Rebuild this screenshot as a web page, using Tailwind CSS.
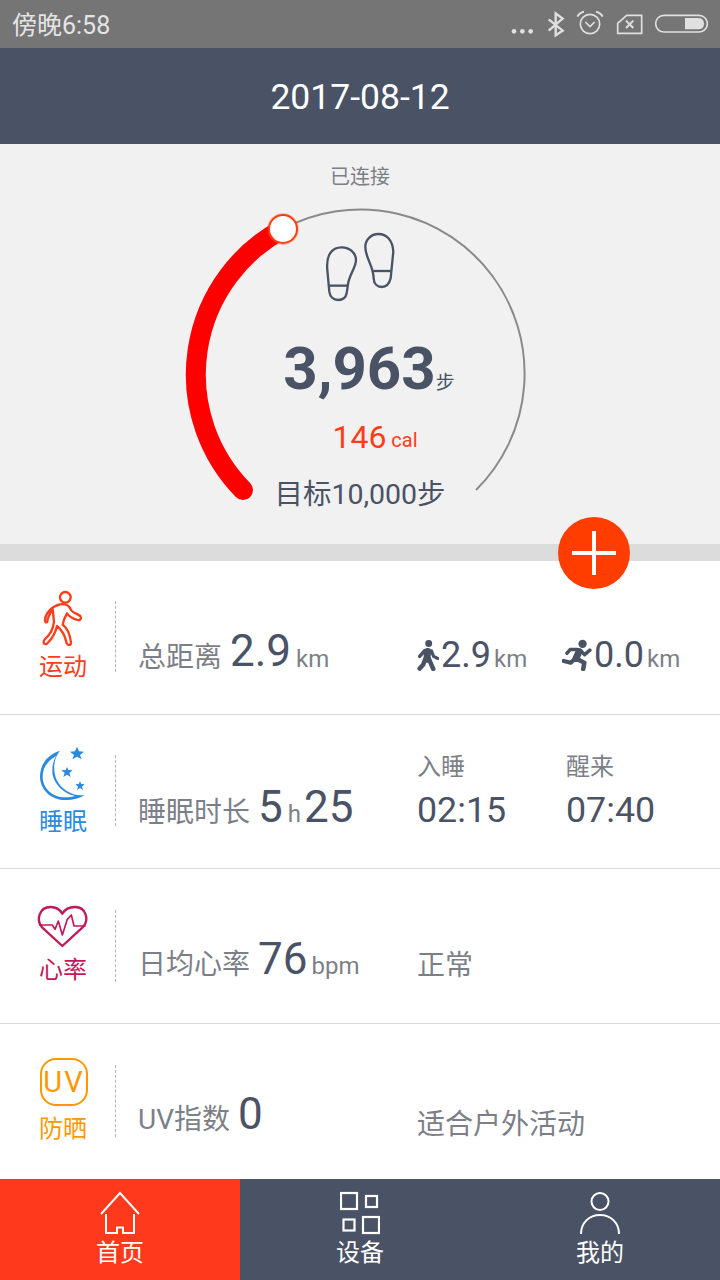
<!DOCTYPE html>
<html lang="zh-CN">
<head>
    <meta charset="UTF-8">
    <meta name="viewport" content="width=device-width, initial-scale=1.0">
    <title>Home</title>
    <script src="https://cdn.jsdelivr.net/npm/@tailwindcss/browser@4"></script>
</head>
<body class="w-[720px] h-[1280px] overflow-hidden bg-white font-['Roboto','Noto_Sans_CJK_SC',sans-serif] text-[#4a5266]">

    <!-- Status bar -->
    <div class="h-12 bg-[#757575] flex items-center justify-between pl-3 pr-3 text-[#e4e4e4]">
        <span class="text-[25px] leading-none pt-[3px]">傍晚6:58</span>
        <svg class="w-[200px] h-[48px]" viewBox="0 0 600 144" fill="none" stroke="#e0e0e0" stroke-width="5">
            <!-- coordinates are zoomed 3x, starting from x=508 -->
            <circle cx="18" cy="94" r="7" fill="#e0e0e0" stroke="none"/>
            <circle cx="43" cy="94" r="7" fill="#e0e0e0" stroke="none"/>
            <circle cx="68" cy="94" r="7" fill="#e0e0e0" stroke="none"/>
            <path d="M122 58 L164 92 L143 106 V40 L164 56 L122 92" stroke-width="7"/>
            <circle cx="246" cy="72" r="29"/>
            <path d="M232 66 L246 80 L260 66" stroke-width="5"/>
            <path d="M208 50 Q214 38 228 35 M264 35 Q278 38 284 50" stroke-width="6"/>
            <path d="M329 100 V70 L356 46 H401 V100 Z"/>
            <path d="M354 62 L376 84 M376 62 L354 84" stroke-width="6"/>
            <rect x="443" y="46" width="155" height="50" rx="25"/>
            <path d="M531 54 H570 Q588 54 588 71 Q588 88 570 88 H531 Z" fill="#e0e0e0" stroke="none"/>
        </svg>
    </div>

    <!-- Date header -->
    <div class="h-24 bg-[#4a5266] flex items-center justify-center pt-1 text-white text-[35.5px] leading-none">2017-08-12</div>

    <!-- Step ring -->
    <div class="relative h-[400px] bg-[#f1f1f1] flex flex-col items-center">
        <div class="mt-[21px] text-[20px] leading-6 text-[#7d7f88]">已连接</div>
        <svg class="absolute left-0 top-0" width="720" height="400" viewBox="0 144 720 400" fill="none">
            <path d="M283 229 A164 164 0 0 1 476 490" stroke="#8a8a8a" stroke-width="2"/>
            <path d="M243 490 A165 165 0 0 1 283 229" stroke="#ff0000" stroke-width="20" stroke-linecap="round"/>
            <circle cx="283" cy="229" r="15" fill="none" stroke="#ff3d0f" stroke-opacity=".25" stroke-width="2"/>
            <circle cx="283" cy="229" r="14" fill="#fff" stroke="#ff3d0f" stroke-width="2"/>
            <g transform="translate(170 190) scale(.3333)" stroke="#4a5266" stroke-width="7">
                <path d="M515 172 C540 172 558 190 558 210 C558 235 535 255 533 290 L530 310 C527 325 515 330 505 330 C490 330 480 320 478 305 L472 240 C468 195 485 172 515 172 Z"/>
                <path d="M477 287 H535"/>
                <path d="M625 132 C650 132 668 150 670 185 L662 265 C658 282 648 291 635 291 C622 291 612 282 611 265 C610 225 586 205 586 170 C586 150 603 132 625 132 Z"/>
                <path d="M608 243 H665"/>
            </g>
        </svg>
        <div class="relative mt-[146px] h-[68px] flex items-end leading-none pl-[18px]">
            <span class="text-[60px] font-bold leading-[68px]">3,963</span>
            <span class="text-[19px] mb-[11px]">步</span>
        </div>
        <div class="relative mt-[14px] flex items-end gap-[5px] pl-[30px] text-[#ff3d1a] leading-none h-[40px]">
            <span class="text-[32px] leading-[40px]">146</span>
            <span class="text-[20px] mb-[7px]">cal</span>
        </div>
        <div class="relative mt-[18px] text-[28.5px] leading-[40px]">目标10,000步</div>
    </div>
    <div class="h-[17px] bg-[#dcdcdc]"></div>

    <!-- Add button -->
    <div class="absolute left-[558px] top-[517px] w-[72px] h-[72px] rounded-full bg-[#ff3d00] flex items-center justify-center">
        <svg width="44" height="44" viewBox="0 0 44 44" stroke="#fff" stroke-width="4"><path d="M0 22 H44 M22 0 V44"/></svg>
    </div>

    <!-- Sport -->
    <div class="h-[154px] border-b border-[#d9d9d9] flex">
        <div class="w-[115px] h-full pl-[39px] shrink-0">
            <svg class="mt-[27px] ml-[1px]" width="46" height="62" viewBox="62 24 138 186" fill="none" stroke="#ff3d1a" stroke-width="7" stroke-linejoin="round">
                <circle cx="138" cy="52" r="16"/>
                <path d="M122 73 C140 70 150 76 155 90 C160 98 175 102 183 108 C188 116 182 122 175 120 C160 116 150 110 143 100 C136 112 132 122 130 134 C145 145 152 165 155 187 C156 196 146 198 142 190 C138 170 128 150 113 138 C108 160 95 180 82 192 C72 194 70 186 76 178 C92 165 102 145 104 125 L100 88 C92 100 84 112 84 125 C80 130 76 126 77 118 C80 98 98 78 122 73 Z"/>
            </svg>
            <div class="mt-[3px] text-2xl leading-7 text-[#ff3d1a]">运动</div>
        </div>
        <div class="mt-[40px] h-[71px] border-l border-dashed border-[#b5b5b5]"></div>
        <div class="flex-1 relative">
            <div class="absolute left-[22px] top-[61px] flex items-baseline whitespace-nowrap">
                <span class="text-[28px] text-[#7d7f88]">总距离</span>
                <span class="text-[44px] leading-[60px] ml-[8px] -translate-y-px">2.9</span>
                <span class="text-2xl text-[#7d7f88] ml-[5px]">km</span>
            </div>
            <div class="absolute left-[301px] top-[66px] flex items-center h-[56px]">
                <svg width="22" height="32" viewBox="50 38 62 92" fill="none" stroke="#4a5266" stroke-linecap="round" stroke-linejoin="round">
                    <circle cx="83" cy="51" r="10" fill="#4a5266" stroke="none"/>
                    <path d="M80 74 L78 96" stroke-width="20"/>
                    <path d="M84 96 L90 110 L96 124" stroke-width="13"/>
                    <path d="M73 96 L67 112 L57 123" stroke-width="13"/>
                    <path d="M72 71 L57 88" stroke-width="10"/>
                    <path d="M91 72 L97 88 L109 94" stroke-width="9"/>
                </svg>
                <span class="text-[36px] leading-none ml-[2px]">2.9</span>
                <span class="text-2xl text-[#7d7f88] ml-[3px] mt-[7px]">km</span>
            </div>
            <div class="absolute left-[446px] top-[66px] flex items-center h-[56px]">
                <svg width="30" height="32" viewBox="486 38 86 92" fill="none" stroke="#4a5266" stroke-linecap="round" stroke-linejoin="round">
                    <circle cx="545" cy="52" r="12" fill="#4a5266" stroke="none"/>
                    <path d="M535 74 L526 94" stroke-width="20"/>
                    <path d="M530 68 L510 68 L500 79" stroke-width="10"/>
                    <path d="M540 72 L551 83 L566 70" stroke-width="10"/>
                    <path d="M528 95 L550 106 L547 124" stroke-width="13"/>
                    <path d="M522 96 L511 106 L491 101" stroke-width="12"/>
                </svg>
                <span class="text-[36px] leading-none ml-[2px]">0.0</span>
                <span class="text-2xl text-[#7d7f88] ml-[3px] mt-[7px]">km</span>
            </div>
        </div>
    </div>

    <!-- Sleep -->
    <div class="h-[154px] border-b border-[#d9d9d9] flex">
        <div class="w-[115px] h-full pl-[39px] shrink-0">
            <svg class="mt-[30px] ml-px" width="48" height="56" viewBox="60 495 144 168" fill="#2a8ae0">
                <path fill-rule="evenodd" d="M120 512 C80 525 60 555 60 590 C60 630 95 660 135 660 C160 660 180 655 193 645 C160 650 125 630 110 600 C98 570 100 535 120 512 Z M108 528 C80 545 68 565 68 590 C68 625 98 652 135 652 C148 652 158 650 165 648 C130 640 105 615 98 585 C95 565 98 545 108 528 Z"/>
                <path d="M171 500 L177 514 L192 515 L180 525 L185 538 L171 530 L157 538 L162 525 L150 515 L165 514 Z"/>
                <path d="M141 560 L145 570 L158 571 L148 579 L152 591 L141 584 L130 591 L134 579 L124 571 L137 570 Z"/>
                <path d="M180 604 L184 612 L194 613 L186 620 L189 630 L180 624 L171 630 L174 620 L166 613 L176 612 Z"/>
            </svg>
            <div class="mt-[7px] text-2xl leading-7 text-[#2a8ae0]">睡眠</div>
        </div>
        <div class="mt-[40px] h-[71px] border-l border-dashed border-[#b5b5b5]"></div>
        <div class="flex-1 relative">
            <div class="absolute left-[22px] top-[62px] flex items-baseline whitespace-nowrap">
                <span class="text-[28px] text-[#7d7f88]">睡眠时长</span>
                <span class="text-[44px] leading-[60px] ml-[8px]">5</span>
                <span class="text-2xl text-[#7d7f88] ml-[5px]">h</span>
                <span class="text-[44px] leading-[60px] ml-[3px]">25</span>
            </div>
            <div class="absolute left-[301px] top-[36px]">
                <div class="text-2xl leading-8 text-[#7d7f88]">入睡</div>
                <div class="text-[35.8px] leading-[44px] mt-[5px]">02:15</div>
            </div>
            <div class="absolute left-[450px] top-[36px]">
                <div class="text-2xl leading-8 text-[#7d7f88]">醒来</div>
                <div class="text-[35.8px] leading-[44px] mt-[5px]">07:40</div>
            </div>
        </div>
    </div>

    <!-- Heart rate -->
    <div class="h-[155px] border-b border-[#d9d9d9] flex">
        <div class="w-[115px] h-full pl-[39px] shrink-0">
            <svg class="mt-[36px] -ml-[2px]" width="52" height="44" viewBox="54 32 156 132" fill="none" stroke="#c2185b" stroke-width="7" stroke-linejoin="round">
                <path d="M130 155 L70 100 C50 78 60 38 95 38 C112 38 124 48 130 58 C136 48 150 38 168 38 C202 38 212 78 190 100 Z"/>
                <path d="M60 92 H100 L108 105 L118 80 L130 122 L145 75 L157 62 L165 95 H200" stroke-width="5"/>
            </svg>
            <div class="mt-[7px] text-2xl leading-7 text-[#c2185b]">心率</div>
        </div>
        <div class="mt-[41px] h-[72px] border-l border-dashed border-[#b5b5b5]"></div>
        <div class="flex-1 relative">
            <div class="absolute left-[22px] top-[60px] flex items-baseline whitespace-nowrap">
                <span class="text-[28px] text-[#7d7f88]">日均心率</span>
                <span class="text-[44px] leading-[60px] ml-[8px]">76</span>
                <span class="text-2xl text-[#7d7f88] ml-[4px]">bpm</span>
            </div>
            <div class="absolute left-[301px] top-[77px] text-[28px] leading-10 text-[#7d7f88]">正常</div>
        </div>
    </div>

    <!-- UV -->
    <div class="h-[155px] flex">
        <div class="w-[115px] h-full pl-[39px] shrink-0">
            <div class="ml-px mt-[34px] w-12 h-12 rounded-[16px] border-[2.5px] border-[#ff9800] text-[#ff9800] flex items-center justify-center text-[29px] leading-none tracking-[2px]">UV</div>
            <div class="mt-[9px] text-2xl leading-7 text-[#ff9800]">防晒</div>
        </div>
        <div class="mt-[41px] h-[72px] border-l border-dashed border-[#b5b5b5]"></div>
        <div class="flex-1 relative">
            <div class="absolute left-[22px] top-[60px] flex items-baseline whitespace-nowrap">
                <span class="text-[28px] text-[#7d7f88]">UV指数</span>
                <span class="text-[44px] leading-[60px] ml-[8px]">0</span>
            </div>
            <div class="absolute left-[301px] top-[81px] text-[28px] leading-10 text-[#7d7f88]">适合户外活动</div>
        </div>
    </div>

    <!-- Bottom nav -->
    <div class="absolute left-0 top-[1179px] w-[720px] h-[101px] bg-[#4a5266] grid grid-cols-3 text-white text-2xl">
        <div class="bg-[#ff3a1c] flex flex-col items-center">
            <svg class="mt-[11px]" width="40" height="45" viewBox="0 0 40 45" fill="none" stroke="#fff" stroke-width="2">
                <path d="M1 24 L20 3 L39 24"/>
                <path d="M6 24 V43 H17 V37.5 H23 V43 H34 V24"/>
            </svg>
            <div class="mt-[2px] leading-8">首页</div>
        </div>
        <div class="flex flex-col items-center">
            <svg class="mt-[11px]" width="40" height="45" viewBox="0 0 40 45" fill="none" stroke="#fff" stroke-width="2.2">
                <rect x="1" y="3" width="16" height="16"/>
                <rect x="26" y="6" width="11" height="11"/>
                <rect x="3.5" y="29.5" width="11" height="11"/>
                <rect x="23" y="27" width="16" height="16"/>
            </svg>
            <div class="mt-[2px] leading-8">设备</div>
        </div>
        <div class="flex flex-col items-center">
            <svg class="mt-[11px]" width="42" height="45" viewBox="0 0 42 45" fill="none" stroke="#fff" stroke-width="2">
                <circle cx="21" cy="11.5" r="8.5"/>
                <path d="M2 44 C2 33 10 25 21 25 C32 25 40 33 40 44"/>
            </svg>
            <div class="mt-[2px] leading-8">我的</div>
        </div>
    </div>
</body>
</html>
